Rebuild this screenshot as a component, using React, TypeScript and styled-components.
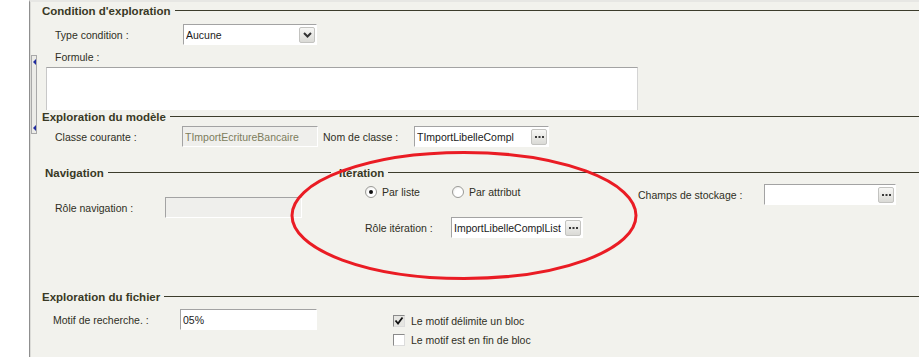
import styled, { createGlobalStyle } from "styled-components";

const GlobalStyle = createGlobalStyle`
  html, body {
    margin: 0;
    padding: 0;
    background: #ffffff;
  }
  body {
    font-family: "Liberation Sans", Arial, sans-serif;
  }
`;

const Dots = () => (
  <svg width="9" height="3" viewBox="0 0 9 3">
    <rect x="0" y="0" width="2" height="2" fill="#3a3a3a" />
    <rect x="3.5" y="0" width="2" height="2" fill="#3a3a3a" />
    <rect x="7" y="0" width="2" height="2" fill="#3a3a3a" />
  </svg>
);

const Chevron = () => (
  <svg width="9" height="6" viewBox="0 0 9 6">
    <polyline points="1,1 4.5,4.5 8,1" fill="none" stroke="#333" strokeWidth="2" />
  </svg>
);

const Check = () => (
  <svg width="10" height="10" viewBox="0 0 10 10">
    <polyline points="1.5,4.5 4,7.5 8.5,1.5" fill="none" stroke="#111" strokeWidth="1.8" />
  </svg>
);

const App = () => {
  return (
    <>
      <GlobalStyle />
      <Screen>
        <Gutter />
        <Panel>
          <Splitter>
            <Arrow />
            <Arrow />
          </Splitter>

          {/* Condition d'exploration */}
          <Title $top={2}>Condition d'exploration</Title>
          <Row $top={6} $indent={13}>
            <Label $w={128}>Type condition :</Label>
            <Field $w={134}>
              <Value>Aucune</Value>
              <SmallButton>
                <Chevron />
              </SmallButton>
            </Field>
          </Row>
          <Row $top={5} $indent={13} $h={14}>
            <Label $w={120}>Formule :</Label>
          </Row>
          <Memo />

          {/* Exploration du modèle */}
          <Title>Exploration du modèle</Title>
          <Row $top={2} $indent={13}>
            <Label $w={127}>Classe courante :</Label>
            <Field $w={136} $disabled>
              <Value>TImportEcritureBancaire</Value>
            </Field>
            <Label $w={96} $lead={5}>
              Nom de classe :
            </Label>
            <Field $w={135}>
              <Value>TImportLibelleCompl</Value>
              <SmallButton $dots>
                <Dots />
              </SmallButton>
            </Field>
          </Row>

          {/* Navigation / Itération */}
          <Split>
            <NavGroup>
              <Title $indent={3}>Navigation</Title>
              <Row $top={17} $indent={13}>
                <Label $w={110}>Rôle navigation :</Label>
                <Field $w={137} $disabled />
              </Row>
            </NavGroup>
            <IterGroup>
              <Title>Itération</Title>
              <IterBody>
                <IterLeft>
                  <Row $top={5} $h={14}>
                    <RadioItem $w={87}>
                      <Radio $checked />
                      Par liste
                    </RadioItem>
                    <RadioItem>
                      <Radio />
                      Par attribut
                    </RadioItem>
                  </Row>
                  <Row $top={18}>
                    <Label $w={86}>Rôle itération :</Label>
                    <Field $w={132}>
                      <Value $gap={4}>ImportLibelleComplList</Value>
                      <SmallButton $dots>
                        <Dots />
                      </SmallButton>
                    </Field>
                  </Row>
                </IterLeft>
                <Row $top={4}>
                  <Label $w={126}>Champs de stockage :</Label>
                  <Field $w={132}>
                    <Value />
                    <SmallButton $dots>
                      <Dots />
                    </SmallButton>
                  </Field>
                </Row>
              </IterBody>
            </IterGroup>
          </Split>

          {/* Exploration du fichier */}
          <Title $top={52}>Exploration du fichier</Title>
          <FileRow>
            <Row $top={5} $indent={11}>
              <Label $w={127}>Motif de recherche. :</Label>
              <Field $w={137}>
                <Value>05%</Value>
              </Field>
            </Row>
            <Checks>
              <CheckItem>
                <CheckBox $checked>
                  <Check />
                </CheckBox>
                Le motif délimite un bloc
              </CheckItem>
              <CheckItem>
                <CheckBox />
                Le motif est en fin de bloc
              </CheckItem>
            </Checks>
          </FileRow>
        </Panel>

        {/* annotation tracée à la main */}
        <Annotation width="919" height="357" viewBox="0 0 919 357">
          <ellipse
            cx="464"
            cy="215.5"
            rx="172"
            ry="63"
            fill="none"
            stroke="#ea1c24"
            strokeWidth="3"
          />
        </Annotation>
      </Screen>
    </>
  );
};

export default App;

const Screen = styled.div`
  position: relative;
  display: flex;
  width: 919px;
  height: 357px;
  overflow: hidden;
  background: #ffffff;
  font-family: "Liberation Sans", Arial, sans-serif;
  font-size: 10.5px;
  color: #2f2f24;
`;

const Gutter = styled.div`
  width: 29px;
  flex-shrink: 0;
  background: #ffffff;
`;

const Panel = styled.div`
  position: relative;
  flex: 1;
  display: flex;
  flex-direction: column;
  background: #f2f2ed;
  border-left: 1px solid #8f8f8f;
  border-top: 2px solid #e7e7e4;
  box-shadow: inset 1px 0 0 #dcdcd8;
  padding-left: 12px;
`;

const Splitter = styled.div`
  position: absolute;
  left: 1px;
  top: 53px;
  box-sizing: border-box;
  width: 6px;
  height: 79px;
  border: 1px solid #a9a9a9;
  background: #ecece8;
  display: flex;
  flex-direction: column;
  justify-content: space-between;
  align-items: center;
  padding: 3px 0 2px;
`;

const Arrow = styled.span`
  width: 0;
  height: 0;
  border-top: 3px solid transparent;
  border-bottom: 3px solid transparent;
  border-right: 3px solid #1f2a9e;
`;

const Title = styled.div<{ $top?: number; $indent?: number }>`
  display: flex;
  align-items: center;
  gap: 4px;
  height: 14px;
  margin-top: ${({ $top }) => $top ?? 0}px;
  padding-left: ${({ $indent }) => $indent ?? 0}px;
  font-size: 11.5px;
  font-weight: bold;
  color: #393925;
  white-space: nowrap;

  &::after {
    content: "";
    flex: 1;
    height: 1px;
    margin-top: -1px;
    background: #3d3d2c;
  }
`;

const Row = styled.div<{ $top?: number; $indent?: number; $h?: number }>`
  display: flex;
  align-items: center;
  height: ${({ $h }) => $h ?? 21}px;
  margin-top: ${({ $top }) => $top ?? 0}px;
  padding-left: ${({ $indent }) => $indent ?? 0}px;
`;

const Label = styled.span<{ $w: number; $lead?: number }>`
  box-sizing: border-box;
  flex-shrink: 0;
  width: ${({ $w }) => $w}px;
  padding-left: ${({ $lead }) => $lead ?? 0}px;
  white-space: nowrap;
`;

const Field = styled.div<{ $w: number; $disabled?: boolean }>`
  box-sizing: border-box;
  display: flex;
  align-items: center;
  flex-shrink: 0;
  width: ${({ $w }) => $w}px;
  height: 21px;
  padding: 0 1px 0 2px;
  background: ${({ $disabled }) => ($disabled ? "#efefec" : "#ffffff")};
  color: ${({ $disabled }) => ($disabled ? "#7d7d5c" : "#1a1a1a")};
  border: 1px solid;
  border-color: #a3a3a3 #ffffff #ffffff #a3a3a3;
`;

const Value = styled.span<{ $gap?: number }>`
  flex: 1;
  margin-right: ${({ $gap }) => $gap ?? 0}px;
  overflow: hidden;
  white-space: nowrap;
`;

const SmallButton = styled.span<{ $dots?: boolean }>`
  box-sizing: border-box;
  display: flex;
  align-items: ${({ $dots }) => ($dots ? "flex-end" : "center")};
  justify-content: center;
  flex-shrink: 0;
  width: 16px;
  height: 16px;
  padding-bottom: ${({ $dots }) => ($dots ? "5px" : "0")};
  border: 1px solid #c3c3c0;
  border-radius: 2px;
  background: linear-gradient(#f7f7f5, #dadad6);
`;

const Memo = styled.div`
  box-sizing: border-box;
  width: 592px;
  height: 43px;
  margin: 3px 0 0 4px;
  background: #ffffff;
  border-top: 1px solid #a3a3a3;
  border-left: 1px solid #c8c8c8;
  border-right: 1px solid #d4d4d4;
`;

const Split = styled.div`
  display: flex;
  gap: 8px;
  margin-top: 19px;
  height: 72px;
`;

const NavGroup = styled.div`
  width: 289px;
  flex-shrink: 0;
`;

const IterGroup = styled.div`
  flex: 1;
`;

const IterBody = styled.div`
  display: flex;
  align-items: flex-start;
`;

const IterLeft = styled.div`
  box-sizing: border-box;
  width: 299px;
  flex-shrink: 0;
  padding-left: 26px;
`;

const RadioItem = styled.span<{ $w?: number }>`
  display: flex;
  align-items: center;
  gap: 5px;
  width: ${({ $w }) => ($w ? `${$w}px` : "auto")};
  white-space: nowrap;
`;

const Radio = styled.span<{ $checked?: boolean }>`
  box-sizing: border-box;
  position: relative;
  width: 12px;
  height: 12px;
  border-radius: 50%;
  border: 1px solid #9b9b98;
  background: radial-gradient(circle at 60% 60%, #ffffff 45%, #e2e2de 100%);

  &::after {
    content: "";
    position: absolute;
    left: 3px;
    top: 3px;
    width: 4px;
    height: 4px;
    border-radius: 50%;
    background: ${({ $checked }) => ($checked ? "#111111" : "transparent")};
  }
`;

const FileRow = styled.div`
  display: flex;
  align-items: flex-start;
  gap: 76px;
`;

const Checks = styled.div`
  display: flex;
  flex-direction: column;
  padding-top: 2px;
  margin-top: 5px;
`;

const CheckItem = styled.label`
  display: flex;
  align-items: center;
  gap: 6px;
  height: 19px;
  white-space: nowrap;
`;

const CheckBox = styled.span<{ $checked?: boolean }>`
  box-sizing: border-box;
  display: flex;
  align-items: center;
  justify-content: center;
  width: 12px;
  height: 12px;
  border: 1px solid;
  border-color: #8a8a8a #dcdcdc #dcdcdc #8a8a8a;
  background: ${({ $checked }) => ($checked ? "#e6e6e2" : "#ffffff")};
`;

const Annotation = styled.svg`
  position: absolute;
  left: 0;
  top: 0;
  pointer-events: none;
`;
